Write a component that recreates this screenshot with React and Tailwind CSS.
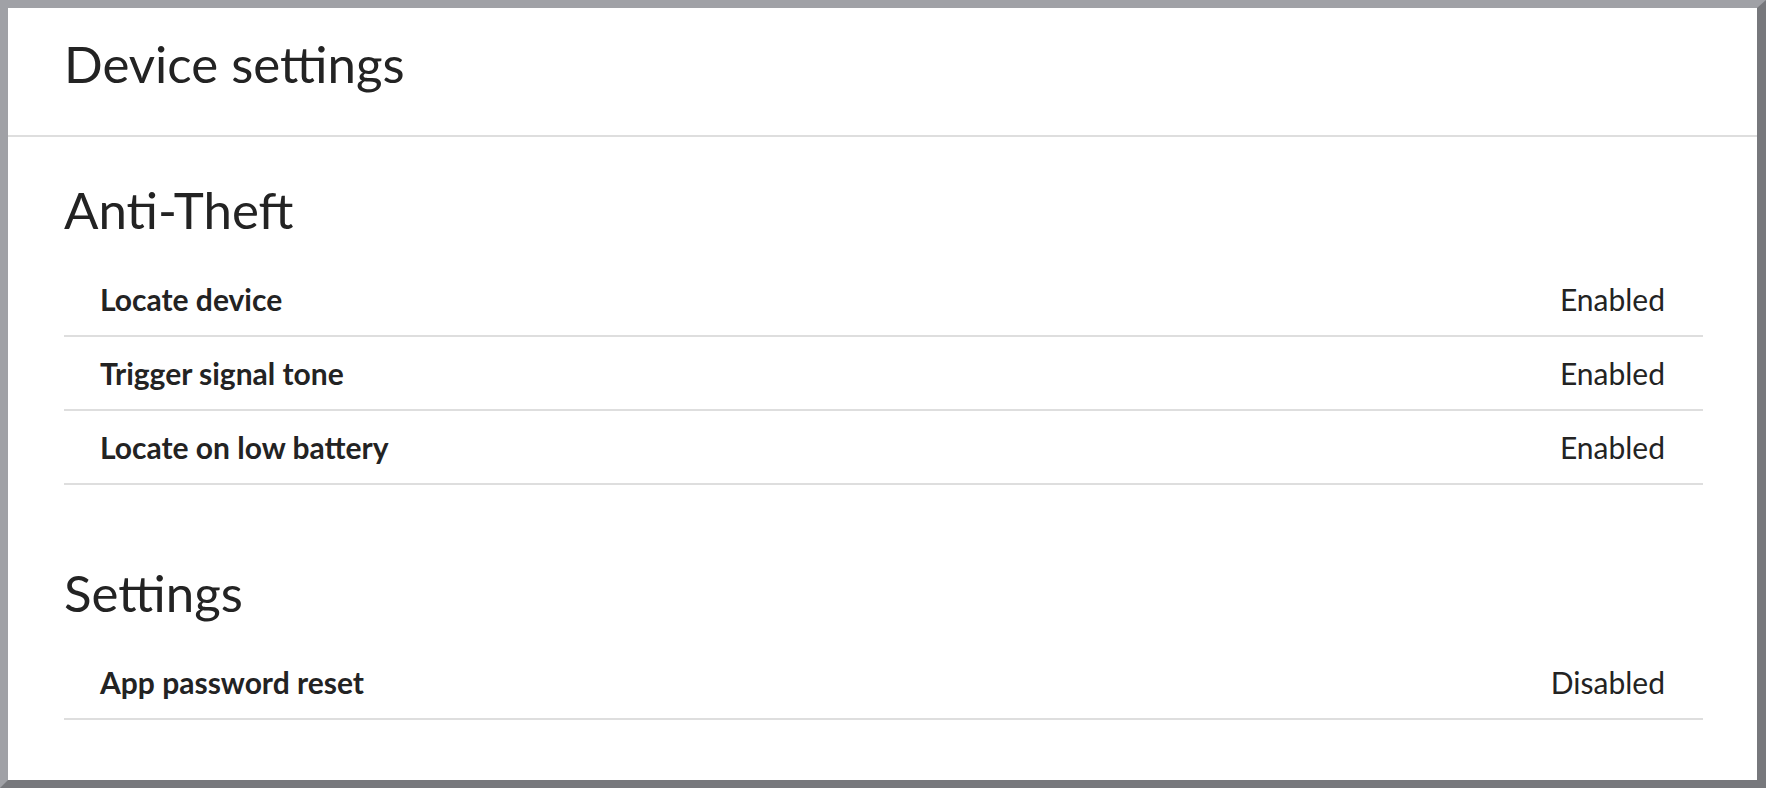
import React from 'react'

const antiTheft = [
  { label: 'Locate device', value: 'Enabled' },
  { label: 'Trigger signal tone', value: 'Enabled' },
  { label: 'Locate on low battery', value: 'Enabled' },
]

const settings = [{ label: 'App password reset', value: 'Disabled' }]

function Row({ label, value }) {
  return (
    <div className="flex h-[74px] items-center justify-between border-b-2 border-[#dedede] pl-[36px] pr-[38px]">
      <span className="text-[30px] font-bold leading-[36px]">{label}</span>
      <span className="text-[30px] leading-[36px]">{value}</span>
    </div>
  )
}

function Section({ title, rows }) {
  return (
    <section>
      <h2 className="mb-[28px] text-[51px] leading-none">{title}</h2>
      {rows.map((r) => (
        <Row key={r.label} label={r.label} value={r.value} />
      ))}
    </section>
  )
}

export default function App() {
  return (
    <div
      className="h-screen w-full overflow-hidden border-[8px] border-r-[9px] border-t-[#a0a1a6] border-l-[#a0a1a6] border-r-[#77787c] border-b-[#77787c] bg-white text-[#232323]"
      style={{ fontFamily: 'Lato, "Open Sans", sans-serif' }}
    >
      <header className="h-[129px] border-b-2 border-[#dedede] pl-[56px] pt-[30px]">
        <h1 className="text-[51px] leading-none">Device settings</h1>
      </header>
      <div className="pl-[56px] pr-[54px] pt-[47px]">
        <Section title="Anti-Theft" rows={antiTheft} />
        <div className="h-[82px]" />
        <Section title="Settings" rows={settings} />
      </div>
    </div>
  )
}
